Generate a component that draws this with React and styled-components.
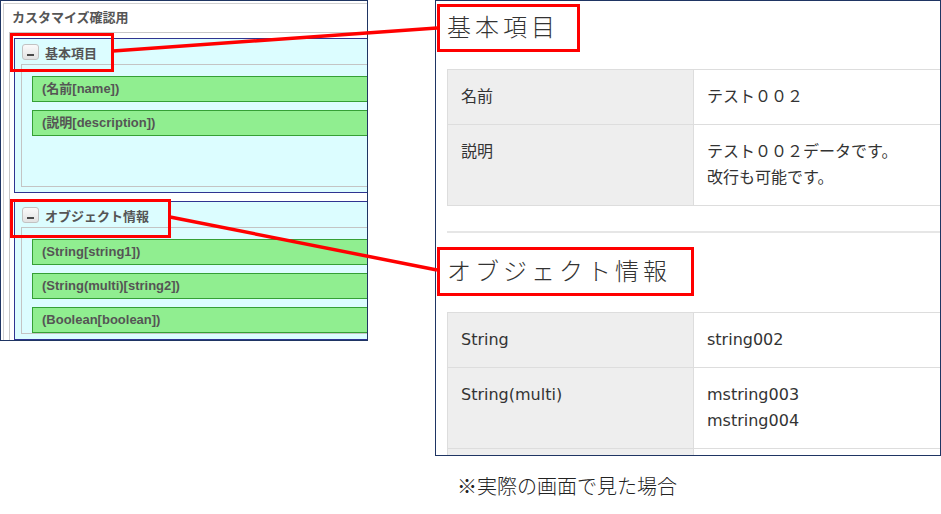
import React from "react";
import styled, { createGlobalStyle } from "styled-components";

const GlobalStyle = createGlobalStyle`
  html, body {
    margin: 0;
    padding: 0;
    background: #ffffff;
  }
  body {
    font-family: "Noto Sans CJK JP", "DejaVu Sans", sans-serif;
  }
`;

const Page = styled.div`
  position: relative;
  width: 941px;
  height: 514px;
  display: flex;
  align-items: flex-start;
  overflow: hidden;
`;

/* ---------- left : form designer ---------- */

const LeftPanel = styled.div`
  width: 368px;
  height: 341px;
  box-sizing: border-box;
  border: 1px solid #1f3563;
  padding: 2px;
  overflow: hidden;
  flex-shrink: 0;
`;

const Frame = styled.div`
  width: 520px;
  min-height: 400px;
  border: 1px solid #d0d0d0;
`;

const Title = styled.div`
  height: 28px;
  line-height: 28px;
  padding-left: 8px;
  font-family: "Liberation Sans", "Noto Sans CJK JP", sans-serif;
  font-size: 13px;
  font-weight: 700;
  color: #555555;
`;

const Body = styled.div`
  margin-left: 5px;
  border-top: 1px solid #c8c8c8;
  border-left: 1px solid #c8c8c8;
  padding: 5px 0 0 4px;
  display: flex;
  flex-direction: column;
  gap: 8px;
`;

const Section = styled.div`
  border: 1px solid #2f3491;
  background: #dcfdff;
  padding: 5px 0 5px 7px;
`;

const SectionHead = styled.div`
  display: flex;
  align-items: center;
  gap: 6px;
  height: 16px;
  margin-bottom: 4px;
  font-family: "Liberation Sans", "Noto Sans CJK JP", sans-serif;
  font-size: 13px;
  font-weight: 700;
  color: #555555;
`;

const Toggle = styled.span`
  position: relative;
  width: 15px;
  height: 14px;
  border: 1px solid #c2c2c2;
  border-radius: 3px;
  background: linear-gradient(#fafafa, #e2e2e2);

  &::after {
    content: "";
    position: absolute;
    left: 4px;
    top: 9px;
    width: 7px;
    height: 2px;
    background: #4a4a4a;
  }
`;

const FieldBox = styled.div`
  margin-left: -1px;
  border: 1px solid #c4c4c4;
  padding: 11px 0 0 10px;
  min-height: ${(p) => p.$minHeight || 0}px;
  display: flex;
  flex-direction: column;
  gap: 8px;
`;

const Field = styled.div`
  height: 24px;
  line-height: 24px;
  border: 1px solid #35a035;
  background: #90ee90;
  padding-left: 9px;
  font-family: "Liberation Sans", "Noto Sans CJK JP", sans-serif;
  font-size: 13px;
  font-weight: 700;
  color: #555555;
`;

/* ---------- right : actual screen ---------- */

const RightCol = styled.div`
  margin-left: 67px;
  width: 506px;
  flex-shrink: 0;
`;

const RightPanel = styled.div`
  height: 456px;
  box-sizing: border-box;
  border: 1px solid #1f3563;
  padding: 9px 0 0 11px;
  overflow: hidden;
`;

const Heading = styled.h2`
  margin: ${(p) => p.$top || 0}px 0 0 0;
  font-size: 24px;
  line-height: 32px;
  font-weight: 300;
  letter-spacing: 4px;
  color: #333333;
`;

const Table = styled.table`
  margin-top: ${(p) => p.$top}px;
  width: 520px;
  border-collapse: collapse;
  font-family: "DejaVu Sans", "Noto Sans CJK JP", sans-serif;
  font-size: 16px;
  line-height: 26px;
  color: #333333;

  td {
    border: 1px solid #dddddd;
    padding: 14px 14px 14px 13px;
    vertical-align: top;
    height: 26px;
  }
`;

const Label = styled.td`
  width: 218px;
  background: #eeeeee;
`;

const Divider = styled.div`
  margin-top: 25px;
  height: 2px;
  background: #e6e6e6;
`;

const Caption = styled.div`
  margin-top: 17px;
  padding-left: 22px;
  font-size: 20px;
  line-height: 26px;
  font-weight: 300;
  color: #222222;
`;

const Overlay = styled.svg`
  position: absolute;
  left: 0;
  top: 0;
  pointer-events: none;
`;

const basic = [
  { label: "名前", value: ["テスト００２"] },
  { label: "説明", value: ["テスト００２データです。", "改行も可能です。"] },
];

// the third row is cut off by the panel edge in the capture, only its top shows
const objectInfo = [
  { label: "String", value: ["string002"] },
  { label: "String(multi)", value: ["mstring003", "mstring004"] },
  { label: "", value: [] },
];

function InfoTable({ rows, top }) {
  return (
    <Table $top={top}>
      <tbody>
        {rows.map((r, n) => (
          <tr key={n}>
            <Label>{r.label}</Label>
            <td>
              {r.value.map((v, i) => (
                <div key={i}>{v}</div>
              ))}
            </td>
          </tr>
        ))}
      </tbody>
    </Table>
  );
}

export default function App() {
  return (
    <>
      <GlobalStyle />
      <Page>
        <LeftPanel>
          <Frame>
            <Title>カスタマイズ確認用</Title>
            <Body>
              <Section>
                <SectionHead>
                  <Toggle />
                  基本項目
                </SectionHead>
                <FieldBox $minHeight={110}>
                  <Field>(名前[name])</Field>
                  <Field>(説明[description])</Field>
                </FieldBox>
              </Section>
              <Section>
                <SectionHead>
                  <Toggle />
                  オブジェクト情報
                </SectionHead>
                <FieldBox>
                  <Field>(String[string1])</Field>
                  <Field>(String(multi)[string2])</Field>
                  <Field>(Boolean[boolean])</Field>
                </FieldBox>
              </Section>
            </Body>
          </Frame>
        </LeftPanel>

        <RightCol>
          <RightPanel>
            <Heading>基本項目</Heading>
            <InfoTable rows={basic} top={27} />
            <Divider />
            <Heading $top={21}>オブジェクト情報</Heading>
            <InfoTable rows={objectInfo} top={26} />
          </RightPanel>
          <Caption>※実際の画面で見た場合</Caption>
        </RightCol>

        <Overlay width="941" height="514" viewBox="0 0 941 514">
          <g fill="none" stroke="#ff0000" strokeWidth="3">
            <rect x="11.5" y="34.5" width="101" height="36" />
            <rect x="11.5" y="200.5" width="158" height="36" />
            <rect x="438.5" y="5.5" width="140" height="45" />
            <rect x="438.5" y="248.5" width="254" height="46" />
          </g>
          <g stroke="#ff0000" strokeWidth="3.5">
            <line x1="113" y1="51" x2="437" y2="28" />
            <line x1="170" y1="217" x2="437" y2="270" />
          </g>
        </Overlay>
      </Page>
    </>
  );
}
